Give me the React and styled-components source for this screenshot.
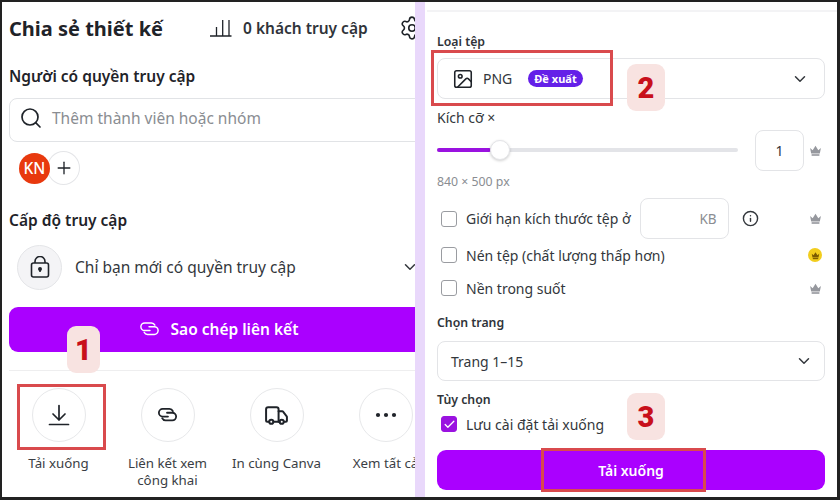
import React from "react";
import styled, { createGlobalStyle } from "styled-components";
import { Search, ChevronDown, Plus, Truck, Settings, Check, Info, Image } from "lucide-react";

const Global = createGlobalStyle`
  html, body { margin: 0; padding: 0; background: #222; }
  * { box-sizing: border-box; }
`;

const Frame = styled.div`
  position: relative;
  width: 840px;
  height: 500px;
  overflow: hidden;
  padding: 2px 3px 3px 2px;
  background: #222;
  display: flex;
  font-family: "Noto Sans", sans-serif;
  color: #1f2329;
`;
const LeftPanel = styled.section`
  width: 413px;
  overflow: hidden;
  background: #fff;
  padding: 0 0 0 7px;
  flex: none;
`;
const Strip = styled.div`
  width: 10px;
  background: #e9d8fb;
  flex: none;
`;
const RightPanel = styled.section`
  flex: 1;
  background: #fff;
  padding: 8px 12px 0 12px;
`;
const TopRule = styled.div`
  height: 2px;
  background: #f3f3f5;
  margin: 0 -12px 21px -10px;
`;
const Header = styled.div`
  display: flex;
  align-items: center;
  height: 32px;
  margin-top: 10px;
  width: 440px;
`;
const Title = styled.h1`
  margin: 0;
  width: 201px;
  flex: none;
  font-size: 20px;
  font-weight: 700;
  white-space: nowrap;
`;
const Stats = styled.div`
  display: flex;
  align-items: center;
  gap: 11px;
  width: 189px;
  flex: none;
  font-size: 15.5px;
  font-weight: 600;
  color: #30343a;
  white-space: nowrap;
`;
const Section = styled.h2`
  margin: ${(p) => p.$mt}px 0 0;
  font-size: 15.5px;
  line-height: 20px;
  font-weight: 600;
  white-space: nowrap;
`;
const SearchBox = styled.div`
  display: flex;
  align-items: center;
  gap: 9px;
  height: 44px;
  margin-top: 12px;
  width: 440px;
  padding: 0 0 4px 9px;
  border: 1px solid #e1e3e6;
  border-radius: 8px;
  font-size: 15.5px;
  color: #8a8d92;
`;
const Avatars = styled.div`
  display: flex;
  align-items: center;
  margin: 9px 0 0 10px;
`;
const Avatar = styled.div`
  width: 31px;
  height: 31px;
  border-radius: 50%;
  background: #e8390e;
  color: #fff;
  font-size: 15.5px;
  font-weight: 500;
  display: flex;
  align-items: center;
  justify-content: center;
  z-index: 1;
`;
const AddCircle = styled.div`
  width: 33px;
  height: 34px;
  margin-left: -3px;
  border-radius: 50%;
  border: 1px solid #e4e5e8;
  display: flex;
  align-items: center;
  justify-content: center;
`;
const AccessRow = styled.div`
  display: flex;
  align-items: center;
  gap: 13px;
  margin: 14px 0 0 8px;
  height: 46px;
  width: 402px;
  font-size: 15.5px;
  color: #33373c;
  white-space: nowrap;
`;
const LockCircle = styled.div`
  width: 45px;
  height: 45px;
  flex: none;
  border-radius: 50%;
  background: #f4f4f6;
  border: 1px solid #e4e5e8;
  display: flex;
  align-items: center;
  justify-content: center;
`;
const Caret = styled.span`
  margin-left: auto;
  display: flex;
`;
const CopyButton = styled.button`
  display: flex;
  align-items: center;
  justify-content: center;
  gap: 10px;
  width: 440px;
  height: 45px;
  margin-top: 17px;
  padding: 0 22px 2px 0;
  background: #aa00ff;
  border: 0;
  border-radius: 9px;
  color: #fff;
  font: 600 15.5px "Noto Sans", sans-serif;
`;
const Rule = styled.div`
  height: 1px;
  background: #eeeeef;
  margin-top: 18px;
`;
const Shortcuts = styled.div`
  display: flex;
  margin: 17px 0 0 -5px;
  width: 440px;
`;
const Shortcut = styled.div`
  width: 109px;
  flex: none;
  display: flex;
  flex-direction: column;
  align-items: center;
  font-size: 13.3px;
  line-height: 17px;
  text-align: center;
  color: #3a3e44;
  white-space: nowrap;
`;
const ShortcutIcon = styled.div`
  width: 54px;
  height: 54px;
  margin-bottom: 13px;
  border: 1px solid #e7e8ea;
  border-radius: 50%;
  display: flex;
  align-items: center;
  justify-content: center;
  color: #1f2329;
`;

const Label = styled.div`
  margin-top: ${(p) => p.$mt || 0}px;
  font-size: 12.3px;
  line-height: 18px;
  font-weight: 600;
  color: #30343a;
`;
const Select = styled.div`
  display: flex;
  align-items: center;
  height: ${(p) => p.$h}px;
  margin-top: ${(p) => p.$mt}px;
  padding: 0 ${(p) => p.$pr}px 0 ${(p) => p.$pl}px;
  border: 1px solid #e3e4e7;
  border-radius: 8px;
  font-size: 14px;
  color: #33373c;
`;
const FileType = styled.span`
  margin-left: 9px;
`;
const Badge = styled.span`
  margin-left: 16px;
  height: 17px;
  padding: 0 6px;
  display: flex;
  align-items: center;
  border-radius: 9px;
  background: #6420e8;
  color: #fff;
  font-size: 11px;
  font-weight: 700;
`;
const SizeLabel = styled.div`
  margin-top: 9px;
  font-size: 14px;
  line-height: 20px;
  color: #33373c;
`;
const SliderRow = styled.div`
  display: flex;
  align-items: center;
  height: 40px;
  margin-top: 2px;
`;
const Track = styled.div`
  position: relative;
  width: 301px;
  height: 4px;
  border-radius: 2px;
  background: #e3e4e8;
`;
const Fill = styled.div`
  width: ${(p) => p.$pct}%;
  height: 100%;
  border-radius: 2px;
  background: #9a12e0;
`;
const Thumb = styled.div`
  position: absolute;
  top: -8px;
  left: 53px;
  width: 20px;
  height: 20px;
  border-radius: 50%;
  background: #fff;
  border: 1px solid #e4e5e8;
  box-shadow: 0 1px 3px rgba(0, 0, 0, 0.2);
`;
const NumBox = styled.div`
  width: 49px;
  height: 41px;
  margin-left: 17px;
  border: 1px solid #e3e4e7;
  border-radius: 8px;
  display: flex;
  align-items: center;
  justify-content: center;
  font-size: 14px;
  color: #33373c;
`;
const CrownSlot = styled.span`
  margin-left: auto;
  margin-right: 3px;
  display: flex;
  align-items: center;
  justify-content: center;
  width: 14px;
  height: 14px;
  border-radius: 50%;
  background: ${(p) => (p.$gold ? "#f2cd1d" : "transparent")};
`;
const Dimensions = styled.div`
  margin-top: 4px;
  font-size: 12.3px;
  line-height: 16px;
  color: #8a8d92;
`;
const OptionRow = styled.label`
  display: flex;
  align-items: center;
  height: ${(p) => p.$h}px;
  margin-top: ${(p) => p.$mt || 0}px;
  padding-left: 4px;
  font-size: 14px;
  color: #33373c;
  white-space: nowrap;
`;
const Box = styled.span`
  width: 16px;
  height: 16px;
  margin-right: 9px;
  flex: none;
  border: 1px solid #9a9ca1;
  border-radius: 3px;
  display: flex;
  align-items: center;
  justify-content: center;
  background: ${(p) => (p.$on ? "#9a12e0" : "#fff")};
  border-color: ${(p) => (p.$on ? "#9a12e0" : "#9a9ca1")};
`;
const KbBox = styled.div`
  width: 89px;
  height: 41px;
  margin-left: 9px;
  padding-right: 11px;
  border: 1px solid #e3e4e7;
  border-radius: 8px;
  display: flex;
  align-items: center;
  justify-content: flex-end;
  color: #8a8d92;
  font-size: 13.5px;
`;
const InfoIcon = styled.span`
  margin-left: 13px;
  display: flex;
`;
const DownloadButton = styled.button`
  display: block;
  width: 100%;
  height: 40px;
  margin-top: 14px;
  background: #aa00ff;
  border: 0;
  border-radius: 9px;
  color: #fff;
  font: 600 14px "Noto Sans", sans-serif;
`;

const Outline = styled.div`
  position: absolute;
  left: ${(p) => p.$x}px;
  top: ${(p) => p.$y}px;
  width: ${(p) => p.$w}px;
  height: ${(p) => p.$h}px;
  border: 3px solid #d94a4d;
`;
const Step = styled.div`
  position: absolute;
  left: ${(p) => p.$x}px;
  top: ${(p) => p.$y}px;
  width: ${(p) => p.$w}px;
  height: 47px;
  border-radius: 9px;
  background: #f8e3e1;
  color: #c8101b;
  display: flex;
  align-items: center;
  justify-content: center;
  font-family: Roboto, sans-serif;
  font-size: 29px;
  font-weight: 900;
`;

const Bars = () => (
  <svg width="22" height="18" viewBox="0 0 22 18" fill="none" stroke="#1f2329" strokeWidth="1.3">
    <path d="M0 17h21.5M6.5 17V8M12.7 17V1M19 17V1" />
  </svg>
);
const Lock = () => (
  <svg width="20" height="22" viewBox="0 0 20 22" fill="none" stroke="#1f2329" strokeWidth="1.6">
    <rect x="1.5" y="7" width="17" height="14" rx="2" />
    <path d="M5 7V5.5a5 5 0 0 1 10 0V7" />
    <circle cx="10" cy="13" r="1.2" fill="#1f2329" />
    <path d="M10 13v3" />
  </svg>
);
const LinkRings = ({ w = 24, sw = 1.7 }) => (
  <svg width={w} height={(w * 16) / 24} viewBox="0 0 24 16" fill="none" stroke="currentColor" strokeWidth={sw} strokeLinecap="round">
    <path d="M12.5 10H7a4 4 0 0 1 0-8h7a4 4 0 0 1 3.6 2.3" />
    <path d="M11.5 6H17a4 4 0 0 1 0 8h-7a4 4 0 0 1-3.6-2.3" />
  </svg>
);
const DownArrow = () => (
  <svg width="24" height="24" viewBox="0 0 24 24" fill="none" stroke="currentColor" strokeWidth="1.7" strokeLinecap="round" strokeLinejoin="round">
    <path d="M12 2.5V17M6 11l6 6 6-6M2.5 21.5h19" />
  </svg>
);
const Dots = () => (
  <svg width="22" height="6" viewBox="0 0 22 6" fill="#1f2329">
    <circle cx="3" cy="3" r="2.1" />
    <circle cx="11" cy="3" r="2.1" />
    <circle cx="19" cy="3" r="2.1" />
  </svg>
);
const SolidCrown = ({ size = 13, color = "#96989e" }) => (
  <svg width={size} height={size} viewBox="0 0 12 12" fill={color}>
    <path d="M1 3.6l2.4 2.2L6 1.6l2.6 4.2L11 3.6 10 8.8H2z" />
    <rect x="2.4" y="9.4" width="7.2" height="1.5" />
  </svg>
);

export default function App() {
  return (
    <Frame>
      <Global />
      <LeftPanel>
        <Header>
          <Title>Chia sẻ thiết kế</Title>
          <Stats>
            <Bars />
            0 khách truy cập
          </Stats>
          <Settings size={26} strokeWidth={1.5} />
        </Header>
        <Section $mt={22}>Người có quyền truy cập</Section>
        <SearchBox>
          <Search size={24} strokeWidth={1.7} color="#1f2329" />
          Thêm thành viên hoặc nhóm
        </SearchBox>
        <Avatars>
          <Avatar>KN</Avatar>
          <AddCircle>
            <Plus size={20} strokeWidth={1.6} />
          </AddCircle>
        </Avatars>
        <Section $mt={25}>Cấp độ truy cập</Section>
        <AccessRow>
          <LockCircle>
            <Lock />
          </LockCircle>
          Chỉ bạn mới có quyền truy cập
          <Caret>
            <ChevronDown size={18} strokeWidth={2} />
          </Caret>
        </AccessRow>
        <CopyButton>
          <LinkRings w={23} sw={1.5} />
          Sao chép liên kết
        </CopyButton>
        <Rule />
        <Shortcuts>
          <Shortcut>
            <ShortcutIcon>
              <DownArrow />
            </ShortcutIcon>
            Tải xuống
          </Shortcut>
          <Shortcut>
            <ShortcutIcon>
              <LinkRings w={23} sw={1.9} />
            </ShortcutIcon>
            Liên kết xem
            <br />
            công khai
          </Shortcut>
          <Shortcut>
            <ShortcutIcon>
              <Truck size={25} strokeWidth={1.9} />
            </ShortcutIcon>
            In cùng Canva
          </Shortcut>
          <Shortcut>
            <ShortcutIcon>
              <Dots />
            </ShortcutIcon>
            Xem tất cả
          </Shortcut>
        </Shortcuts>
      </LeftPanel>
      <Strip />
      <RightPanel>
        <TopRule />
        <Label>Loại tệp</Label>
        <Select $h={41} $mt={7} $pl={14} $pr={15}>
          <Image size={22} strokeWidth={1.7} color="#1f2329" />
          <FileType>PNG</FileType>
          <Badge>Đề xuất</Badge>
          <Caret>
            <ChevronDown size={18} strokeWidth={2} />
          </Caret>
        </Select>
        <SizeLabel>Kích cỡ ×</SizeLabel>
        <SliderRow>
          <Track>
            <Fill $pct={18} />
            <Thumb />
          </Track>
          <NumBox>1</NumBox>
          <CrownSlot>
            <SolidCrown />
          </CrownSlot>
        </SliderRow>
        <Dimensions>840 × 500 px</Dimensions>
        <OptionRow $h={41} $mt={8}>
          <Box />
          Giới hạn kích thước tệp ở
          <KbBox>KB</KbBox>
          <InfoIcon>
            <Info size={17} strokeWidth={2} />
          </InfoIcon>
          <CrownSlot>
            <SolidCrown />
          </CrownSlot>
        </OptionRow>
        <OptionRow $h={24} $mt={4}>
          <Box />
          Nén tệp (chất lượng thấp hơn)
          <CrownSlot $gold>
            <SolidCrown size={9} color="#7a5a00" />
          </CrownSlot>
        </OptionRow>
        <OptionRow $h={24} $mt={9}>
          <Box />
          Nền trong suốt
          <CrownSlot>
            <SolidCrown />
          </CrownSlot>
        </OptionRow>
        <Label $mt={14}>Chọn trang</Label>
        <Select $h={40} $mt={9} $pl={13} $pr={11}>
          Trang 1–15
          <Caret>
            <ChevronDown size={18} strokeWidth={2} />
          </Caret>
        </Select>
        <Label $mt={10}>Tùy chọn</Label>
        <OptionRow $h={24} $mt={3}>
          <Box $on>
            <Check size={13} strokeWidth={2.4} color="#fff" />
          </Box>
          Lưu cài đặt tải xuống
        </OptionRow>
        <DownloadButton>Tải xuống</DownloadButton>
      </RightPanel>

      <Outline $x={17} $y={384} $w={89} $h={66} />
      <Outline $x={431} $y={50} $w={182} $h={56} />
      <Outline $x={541} $y={448} $w={165} $h={44} />
      <Step $x={67} $y={326} $w={33}>1</Step>
      <Step $x={627} $y={64} $w={38}>2</Step>
      <Step $x={627} $y={393} $w={38}>3</Step>
    </Frame>
  );
}
